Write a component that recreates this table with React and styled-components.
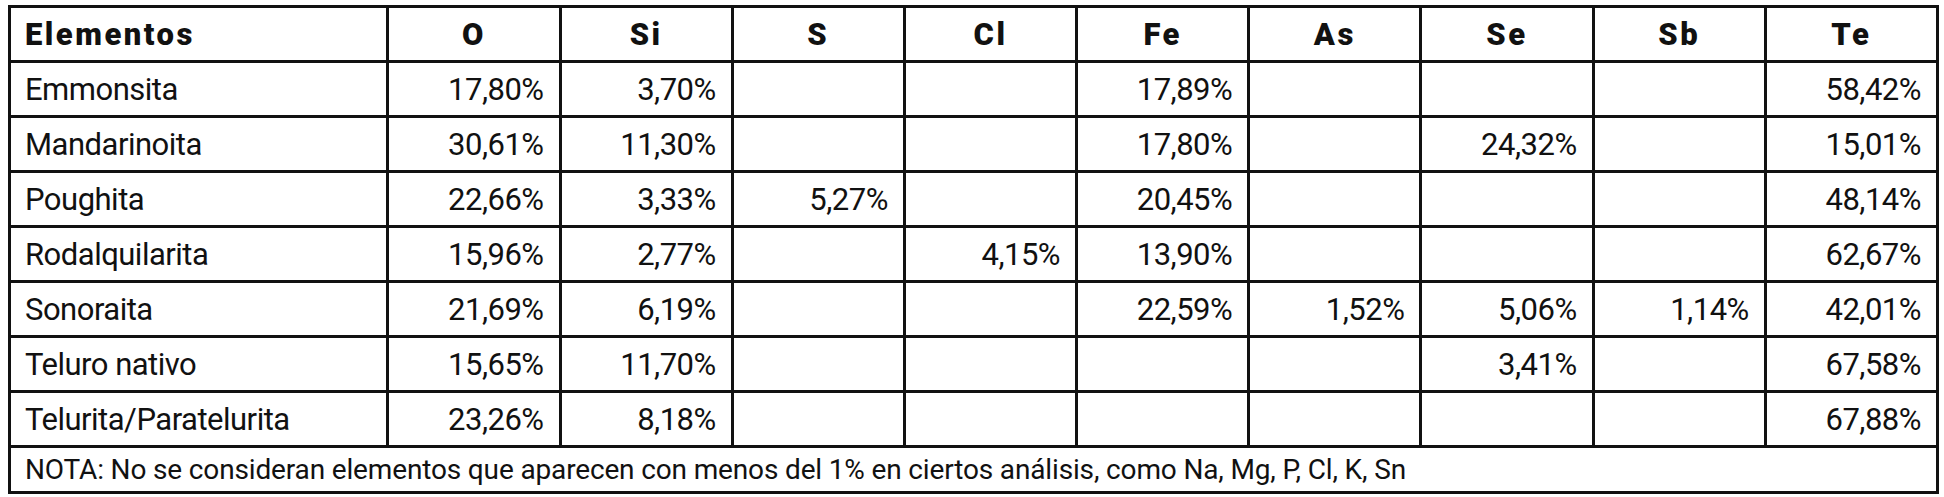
import React from "react";
import styled, { createGlobalStyle } from "styled-components";

const GlobalStyle = createGlobalStyle`
  html, body {
    margin: 0;
    padding: 0;
    background: #ffffff;
  }
  body {
    padding: 5px 0 0 8px;
    font-family: Roboto, "Liberation Sans", sans-serif;
    color: #111111;
  }
`;

const Table = styled.table`
  border-collapse: collapse;
  table-layout: fixed;
  width: 1931px;
  font-family: Roboto, "Liberation Sans", sans-serif;
  font-size: 31px;
  letter-spacing: -0.5px;
  color: #111111;
`;

const HeadCell = styled.th`
  border: 3px solid #111111;
  height: 52px;
  padding: 0 12px;
  font-weight: 900;
  letter-spacing: 2.5px;
  text-align: ${({ $left }) => ($left ? "left" : "center")};
  padding-left: ${({ $left }) => ($left ? "14px" : "12px")};
`;

const Row = styled.tr`
  height: 55px;
`;

const NameCell = styled.td`
  border: 3px solid #111111;
  padding: 0 14px;
  text-align: left;
  white-space: nowrap;
`;

const ValueCell = styled.td`
  border: 3px solid #111111;
  padding: 0 15px 0 8px;
  text-align: right;
  white-space: nowrap;
`;

const NoteCell = styled.td`
  border: 3px solid #111111;
  height: 43px;
  padding: 0 14px;
  text-align: left;
  font-size: 28px;
  letter-spacing: -0.15px;
  white-space: nowrap;
`;

const columns = ["O", "Si", "S", "Cl", "Fe", "As", "Se", "Sb", "Te"];

const rows = [
  { name: "Emmonsita", values: ["17,80%", "3,70%", "", "", "17,89%", "", "", "", "58,42%"] },
  { name: "Mandarinoita", values: ["30,61%", "11,30%", "", "", "17,80%", "", "24,32%", "", "15,01%"] },
  { name: "Poughita", values: ["22,66%", "3,33%", "5,27%", "", "20,45%", "", "", "", "48,14%"] },
  { name: "Rodalquilarita", values: ["15,96%", "2,77%", "", "4,15%", "13,90%", "", "", "", "62,67%"] },
  { name: "Sonoraita", values: ["21,69%", "6,19%", "", "", "22,59%", "1,52%", "5,06%", "1,14%", "42,01%"] },
  { name: "Teluro nativo", values: ["15,65%", "11,70%", "", "", "", "", "3,41%", "", "67,58%"] },
  { name: "Telurita/Paratelurita", values: ["23,26%", "8,18%", "", "", "", "", "", "", "67,88%"] },
];

export default function App() {
  return (
    <>
      <GlobalStyle />
      <Table>
        <colgroup>
          <col style={{ width: 378 }} />
          {columns.map((c) => (
            <col key={c} style={{ width: 172 }} />
          ))}
        </colgroup>
        <thead>
          <tr>
            <HeadCell $left>Elementos</HeadCell>
            {columns.map((c) => (
              <HeadCell key={c}>{c}</HeadCell>
            ))}
          </tr>
        </thead>
        <tbody>
          {rows.map((r) => (
            <Row key={r.name}>
              <NameCell>{r.name}</NameCell>
              {r.values.map((v, i) => (
                <ValueCell key={i}>{v}</ValueCell>
              ))}
            </Row>
          ))}
          <tr>
            <NoteCell colSpan={10}>
              NOTA: No se consideran elementos que aparecen con menos del 1% en ciertos análisis, como Na, Mg, P, Cl, K, Sn
            </NoteCell>
          </tr>
        </tbody>
      </Table>
    </>
  );
}
